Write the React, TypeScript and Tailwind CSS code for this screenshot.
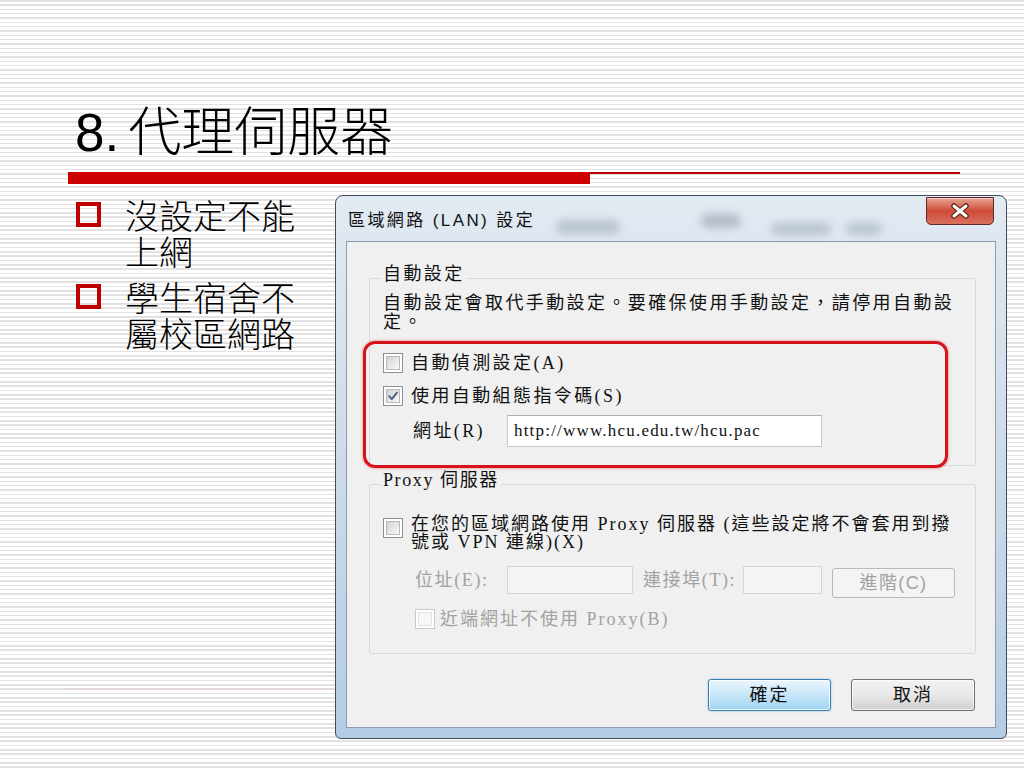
import type { ReactNode } from 'react';

const DLG_FONT = "font-['Liberation_Serif','Noto_Sans_CJK_TC',serif]";

function Checkbox({ checked = false, disabled = false }: { checked?: boolean; disabled?: boolean }) {
    return (
        <span
            className={`flex h-[20px] w-[20px] shrink-0 items-center justify-center border bg-white p-[2px] ${
                disabled ? 'border-[#c9c9c9]' : 'border-[#8e8f8f]'
            }`}
        >
            <span
                className={`relative flex h-full w-full items-center justify-center border ${
                    disabled ? 'border-[#e2e2e2] bg-[#f7f7f7]' : 'border-[#b9b9b9] bg-gradient-to-br from-[#d3d3d3] to-[#f9f9f9]'
                }`}
            >
                {checked && (
                    <svg className="h-[14px] w-[14px]" viewBox="0 0 14 14" fill="none">
                        <path d="M2.5 7.2 L5.6 10.6 L11.6 3" stroke="#46607e" strokeWidth={2.2} strokeLinecap="round" strokeLinejoin="round" />
                    </svg>
                )}
            </span>
        </span>
    );
}

function Bullet({ children, className = '' }: { children: ReactNode; className?: string }) {
    return (
        <li className={`flex items-start ${className}`}>
            <span className="mt-[3px] h-[25px] w-[25px] shrink-0 border-[4px] border-[#c00000]" />
            <span className="ml-[24px] whitespace-nowrap">{children}</span>
        </li>
    );
}

function LanDialog() {
    return (
        <div className="relative flex h-[544px] w-[672px] flex-col overflow-hidden rounded-t-[8px] rounded-b-[6px] border border-[#3d4c5c] bg-gradient-to-b from-[#e2eaf2] via-[#cddbe8] to-[#b4cce4]">
            {/* glass smudges behind the title bar */}
            <span className="absolute left-[220px] top-[24px] h-[14px] w-[64px] rounded-full bg-[#7f8d9c] opacity-40 blur-[4px]" />
            <span className="absolute left-[365px] top-[18px] h-[14px] w-[40px] rounded-full bg-[#6f7d8c] opacity-40 blur-[4px]" />
            <span className="absolute left-[435px] top-[27px] h-[12px] w-[60px] rounded-full bg-[#7f8d9c] opacity-40 blur-[4px]" />
            <span className="absolute left-[510px] top-[27px] h-[12px] w-[36px] rounded-full bg-[#7f8d9c] opacity-40 blur-[4px]" />

            {/* title bar */}
            <div className="relative flex h-[45px] items-start pl-[12px] pr-[12px]">
                <span className="mt-[15px] whitespace-nowrap font-['Liberation_Sans','Noto_Sans_CJK_TC',sans-serif] text-[17px] leading-[20px] tracking-[2.4px] text-[#111]">
                    區域網路 (LAN) 設定
                </span>
                <span className="ml-auto mt-[1px] flex h-[28px] w-[68px] items-center justify-center rounded-b-[5px] border border-[#5e2a24] bg-gradient-to-b from-[#e8a396] via-[#cf4a36] to-[#d9705e] shadow-[inset_0_1px_0_rgba(255,255,255,0.5)]">
                    <svg width="20" height="16" viewBox="0 0 20 16">
                        <path d="M4 3 L16 13 M16 3 L4 13" stroke="#5a2418" strokeWidth={5.5} strokeLinecap="round" />
                        <path d="M4 3 L16 13 M16 3 L4 13" stroke="#ffffff" strokeWidth={3} strokeLinecap="round" />
                    </svg>
                </span>
            </div>

            {/* client area */}
            <div className={`mx-[10px] mb-[10px] flex flex-1 flex-col border border-[#8c9aab] bg-[#f0f0f0] text-[18px] text-[#111] ${DLG_FONT}`}>
                <fieldset className="ml-[22px] mr-[19px] mt-[23px] rounded-[3px] border border-[#d5d9dd] pl-[13px] pt-[3px]">
                    <legend className="ml-[-2px] px-[2px] pb-[8px] leading-[18px] tracking-[2.4px]">自動設定</legend>
                    <p className="whitespace-nowrap leading-[19px] tracking-[2.4px]">
                        自動設定會取代手動設定。要確保使用手動設定，請停用自動設
                        <br />
                        定。
                    </p>
                    <div className="mb-[-3px] ml-[-20px] mt-[9px] h-[127px] w-[585px] rounded-[12px] border-[3px] border-[#d6141c] pl-[17px] pt-[9px] shadow-[0_0_3px_rgba(230,40,40,0.6)]">
                        <div className="flex h-[20px] items-center gap-[8px]">
                            <Checkbox />
                            <span className="whitespace-nowrap tracking-[2.4px]">自動偵測設定(A)</span>
                        </div>
                        <div className="mt-[13px] flex h-[20px] items-center gap-[8px]">
                            <Checkbox checked />
                            <span className="whitespace-nowrap tracking-[2.4px]">使用自動組態指令碼(S)</span>
                        </div>
                        <div className="mt-[9px] flex items-center">
                            <span className="ml-[30px] w-[94px] whitespace-nowrap tracking-[2.4px]">網址(R)</span>
                            <span className="flex h-[32px] w-[315px] items-center border border-[#c5c8cc] border-t-[#abadb3] bg-white pl-[6px] text-[17px] tracking-[1.2px]">
                                http://www.hcu.edu.tw/hcu.pac
                            </span>
                        </div>
                    </div>
                </fieldset>

                <fieldset className="ml-[22px] mr-[19px] mt-[5px] rounded-[3px] border border-[#d5d9dd] pb-[24px] pl-[13px] pt-[18px]">
                    <legend className="ml-[-2px] px-[2px] pb-[8px] leading-[18px] tracking-[1.6px]">Proxy 伺服器</legend>
                    <div className="flex items-start">
                        <span className="mt-[3px]">
                            <Checkbox />
                        </span>
                        <span className="ml-[8px] whitespace-nowrap leading-[18px] tracking-[2px]">
                            在您的區域網路使用 Proxy 伺服器 (這些設定將不會套用到撥
                            <br />
                            號或 VPN 連線)(X)
                        </span>
                    </div>
                    <div className="mt-[15px] flex items-start text-[#a2a2a2]">
                        <span className="ml-[32px] w-[92px] whitespace-nowrap leading-[28px] tracking-[1.6px]">位址(E):</span>
                        <span className="h-[28px] w-[126px] border border-[#d3d5d8] bg-[#f4f4f4]" />
                        <span className="ml-[10px] w-[100px] whitespace-nowrap leading-[28px] tracking-[1.6px]">連接埠(T):</span>
                        <span className="h-[28px] w-[79px] border border-[#d3d5d8] bg-[#f4f4f4]" />
                        <span className="ml-[10px] mt-[2px] flex h-[30px] w-[123px] items-center justify-center rounded-[3px] border border-[#b7babc] bg-[#f4f4f4] font-['Liberation_Sans','Noto_Sans_CJK_TC',sans-serif] tracking-[1.4px]">
                            進階(C)
                        </span>
                    </div>
                    <div className="ml-[32px] mt-[11px] flex h-[20px] items-center">
                        <Checkbox disabled />
                        <span className="ml-[5px] whitespace-nowrap tracking-[2px] text-[#a2a2a2]">近端網址不使用 Proxy(B)</span>
                    </div>
                </fieldset>

                <div className="mr-[20px] mt-[25px] flex justify-end gap-[20px] font-['Liberation_Sans','Noto_Sans_CJK_TC',sans-serif]">
                    <span className="flex h-[32px] w-[123px] items-center justify-center rounded-[3px] border border-[#3c7fb1] bg-gradient-to-b from-[#eaf6fd] via-[#c6e6f8] to-[#9fd4f2] tracking-[2px] shadow-[inset_0_0_0_1px_rgba(255,255,255,0.8),0_0_2px_rgba(60,140,200,0.6)]">
                        確定
                    </span>
                    <span className="flex h-[32px] w-[124px] items-center justify-center rounded-[3px] border border-[#707070] bg-gradient-to-b from-[#f3f3f3] via-[#e8e8e8] to-[#d0d0d0] tracking-[2px] shadow-[inset_0_0_0_1px_rgba(255,255,255,0.7)]">
                        取消
                    </span>
                </div>
            </div>
        </div>
    );
}

export default function App() {
    return (
        <div className="h-[768px] w-[1024px] overflow-hidden bg-[repeating-linear-gradient(180deg,#e2e2e2_0px,#e2e2e2_1.5px,#ffffff_1.5px,#ffffff_4.33px)] font-['Liberation_Sans','Noto_Sans_CJK_TC',sans-serif] text-black">
            <h1 className="pl-[75px] pt-[103px] text-[53px] font-light leading-[60px]">
                <span className="pr-[9px] font-normal">8.</span>代理伺服器
            </h1>

            <div className="mt-[9px] flex items-start">
                <div className="ml-[68px] h-[12px] w-[522px] bg-[#cc0000]" />
                <div className="h-[2px] w-[370px] bg-[#c00000]" />
            </div>

            <div className="mt-[11px] flex">
                <div className="ml-[67px] flex w-[268px] flex-col">
                    <ul className="pl-[9px] pt-[4px] text-[34px] font-light leading-[36px]">
                        <Bullet>
                            沒設定不能
                            <br />
                            上網
                        </Bullet>
                        <Bullet className="mt-[10px]">
                            學生宿舍不
                            <br />
                            屬校區網路
                        </Bullet>
                    </ul>
                    <div className="mb-[50px] mt-auto h-px bg-[#e8d3d3]" />
                </div>
                <LanDialog />
            </div>
        </div>
    );
}
